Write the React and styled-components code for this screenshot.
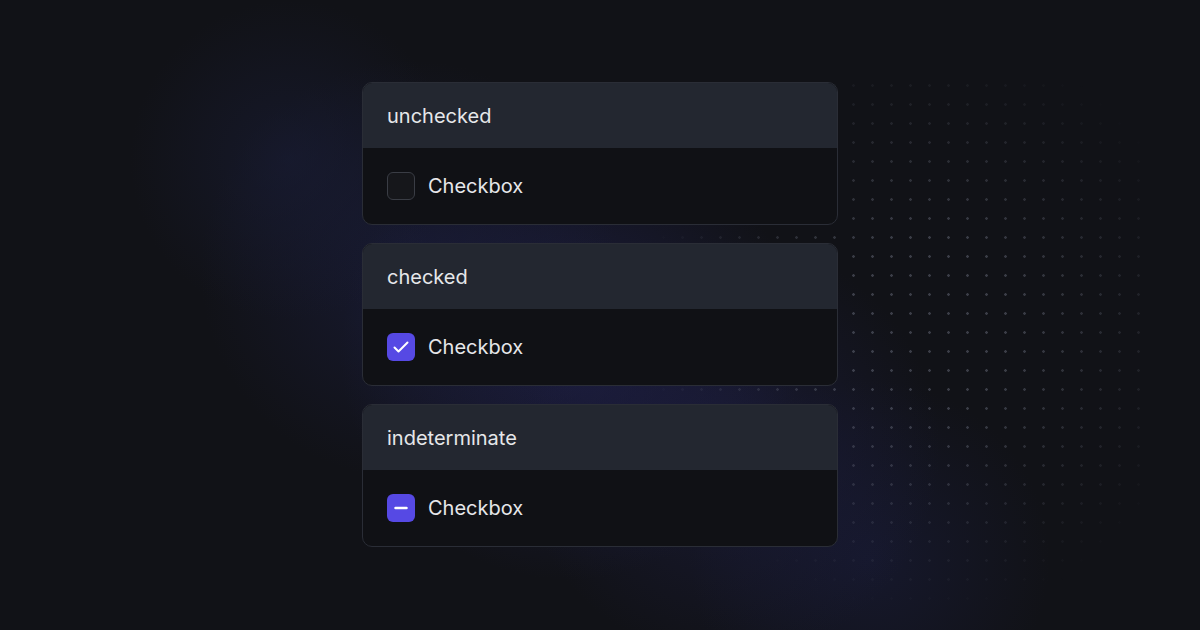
import React from 'react';
import styled, { createGlobalStyle } from 'styled-components';

const colors = {
  page: '#111217',
  header: '#232730',
  body: '#101115',
  border: '#2a2d36',
  text: '#e6e7ea',
  accent: '#5649e4',
  boxBorder: '#3a3d45',
  boxFill: '#16171b'
};

const states = [
  { label: 'unchecked', state: 'unchecked' },
  { label: 'checked', state: 'checked' },
  { label: 'indeterminate', state: 'indeterminate' }
];

const CheckIcon = () => (
  <svg width="28" height="28" viewBox="0 0 28 28" fill="none">
    <path
      d="M7.5 14.5 L11.5 18.5 L20.5 9.5"
      stroke="#fff"
      strokeWidth="2"
      strokeLinecap="round"
      strokeLinejoin="round"
    />
  </svg>
);

const MinusIcon = () => (
  <svg width="28" height="28" viewBox="0 0 28 28" fill="none">
    <path d="M8.5 14 H19.5" stroke="#fff" strokeWidth="2.5" strokeLinecap="round" />
  </svg>
);

const App = () => (
  <>
    <GlobalStyle />
    <Page>
      <Stack>
        {states.map(item => (
          <Card key={item.state}>
            <CardHeader>{item.label}</CardHeader>
            <CardBody>
              <Box $on={item.state !== 'unchecked'}>
                {item.state === 'checked' && <CheckIcon />}
                {item.state === 'indeterminate' && <MinusIcon />}
              </Box>
              <Label>Checkbox</Label>
            </CardBody>
          </Card>
        ))}
      </Stack>
    </Page>
  </>
);

const GlobalStyle = createGlobalStyle`
  html, body {
    margin: 0;
    padding: 0;
    background: ${colors.page};
  }
  body {
    font-family: Inter, 'Liberation Sans', sans-serif;
    -webkit-font-smoothing: antialiased;
  }
`;

const Page = styled.main`
  position: relative;
  width: 1200px;
  height: 630px;
  overflow: hidden;
  display: flex;
  align-items: center;
  justify-content: center;
  background:
    radial-gradient(circle 160px at 290px 160px, rgba(26, 30, 58, 0.55), transparent),
    radial-gradient(circle 210px at 410px 270px, rgba(28, 31, 66, 0.6), transparent),
    radial-gradient(circle 230px at 570px 350px, rgba(32, 33, 78, 0.7), transparent),
    radial-gradient(circle 210px at 730px 450px, rgba(30, 31, 70, 0.6), transparent),
    radial-gradient(circle 180px at 870px 560px, rgba(26, 29, 62, 0.55), transparent),
    ${colors.page};

  &::before {
    content: '';
    position: absolute;
    left: 635px;
    top: 76px;
    width: 510px;
    height: 530px;
    background-image: radial-gradient(circle, rgba(112, 116, 132, 0.45) 1px, transparent 1.6px);
    background-size: 19px 19px;
    -webkit-mask-image: radial-gradient(ellipse 290px 290px at 290px 250px, #000 30%, transparent 100%);
    mask-image: radial-gradient(ellipse 290px 290px at 290px 250px, #000 30%, transparent 100%);
    pointer-events: none;
  }
`;

const Stack = styled.div`
  position: relative;
  z-index: 1;
  width: 476px;
  display: flex;
  flex-direction: column;
  gap: 18px;
  margin-top: -1px;
`;

const Card = styled.section`
  border: 1px solid ${colors.border};
  border-radius: 10px;
  overflow: hidden;
  background: ${colors.body};
`;

const CardHeader = styled.header`
  height: 65px;
  display: flex;
  align-items: center;
  padding: 0 24px;
  background: ${colors.header};
  color: ${colors.text};
  font-size: 20px;
`;

const CardBody = styled.div`
  height: 76px;
  display: flex;
  align-items: center;
  gap: 13px;
  padding: 0 24px;
`;

const Box = styled.span`
  box-sizing: border-box;
  width: 28px;
  height: 28px;
  border-radius: 6px;
  display: flex;
  align-items: center;
  justify-content: center;
  background: ${p => (p.$on ? colors.accent : colors.boxFill)};
  border: ${p => (p.$on ? 'none' : `1.5px solid ${colors.boxBorder}`)};
`;

const Label = styled.span`
  color: ${colors.text};
  font-size: 20px;
`;

export default App;
